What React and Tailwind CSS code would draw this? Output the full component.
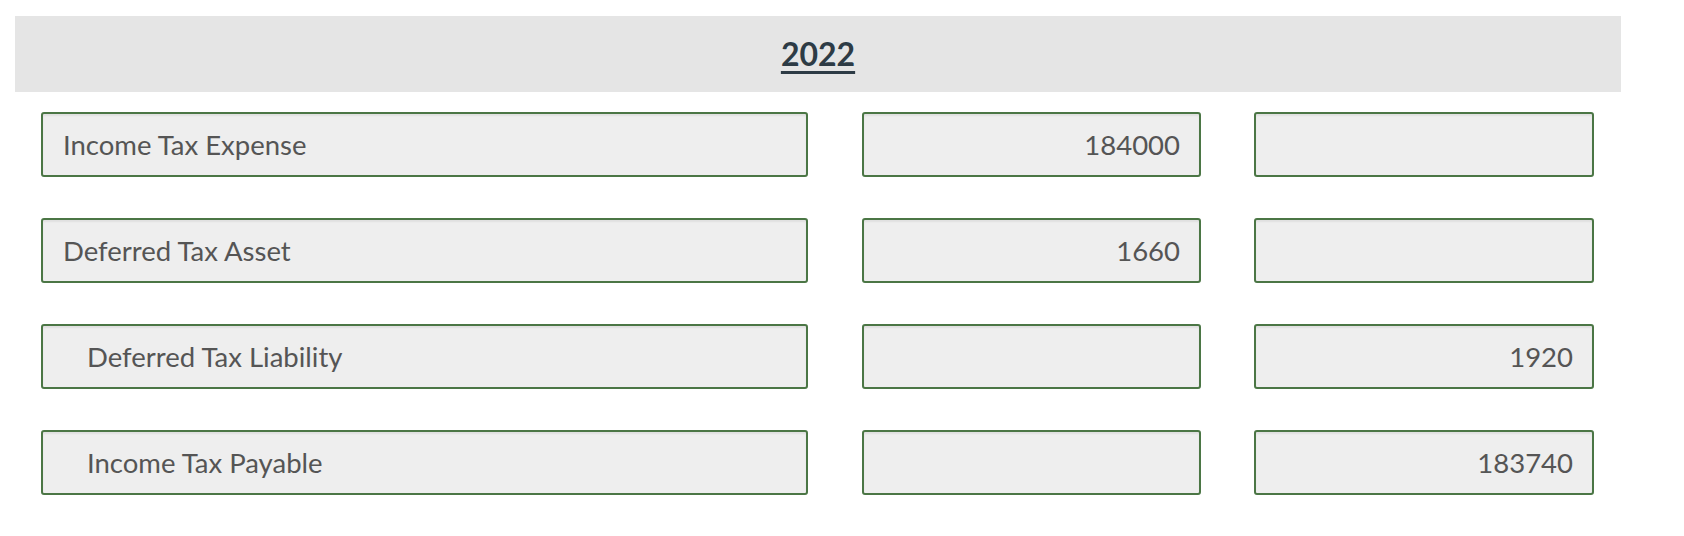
const rows = [
  { label: 'Income Tax Expense', debit: '184000', credit: '', indent: false },
  { label: 'Deferred Tax Asset', debit: '1660', credit: '', indent: false },
  { label: 'Deferred Tax Liability', debit: '', credit: '1920', indent: true },
  { label: 'Income Tax Payable', debit: '', credit: '183740', indent: true },
];

function Cell({ children, className = '' }) {
  return (
    <div
      className={`h-[65px] flex items-center bg-[#eeeeee] border-2 border-[#4b7645] rounded-[3px] shadow-[inset_0_2px_2px_rgba(0,0,0,0.06)] text-[27.5px] text-[#555555] ${className}`}
    >
      {children}
    </div>
  );
}

export default function App() {
  return (
    <div className="min-h-screen bg-white pt-[16px] pl-[15px] font-['Lato','Liberation_Sans',sans-serif]">
      <div className="w-[1606px]">
        {/* Header */}
        <div className="h-[76px] bg-[#e5e5e5] flex items-center justify-center">
          <span className="text-[32px] font-bold text-[#2d3b45] underline decoration-[3px] underline-offset-[5px] leading-none">
            2022
          </span>
        </div>

        <div className="px-[26px] pt-[20px] flex flex-col gap-[41px]">
          {rows.map((r) => (
            <div key={r.label} className="flex">
              <Cell className={`w-[767px] ${r.indent ? 'pl-[44px]' : 'pl-[20px]'}`}>{r.label}</Cell>
              <Cell className="w-[339px] ml-[54px] justify-end pr-[19px]">{r.debit}</Cell>
              <Cell className="w-[340px] ml-[53px] justify-end pr-[19px]">{r.credit}</Cell>
            </div>
          ))}
        </div>
      </div>
    </div>
  );
}
